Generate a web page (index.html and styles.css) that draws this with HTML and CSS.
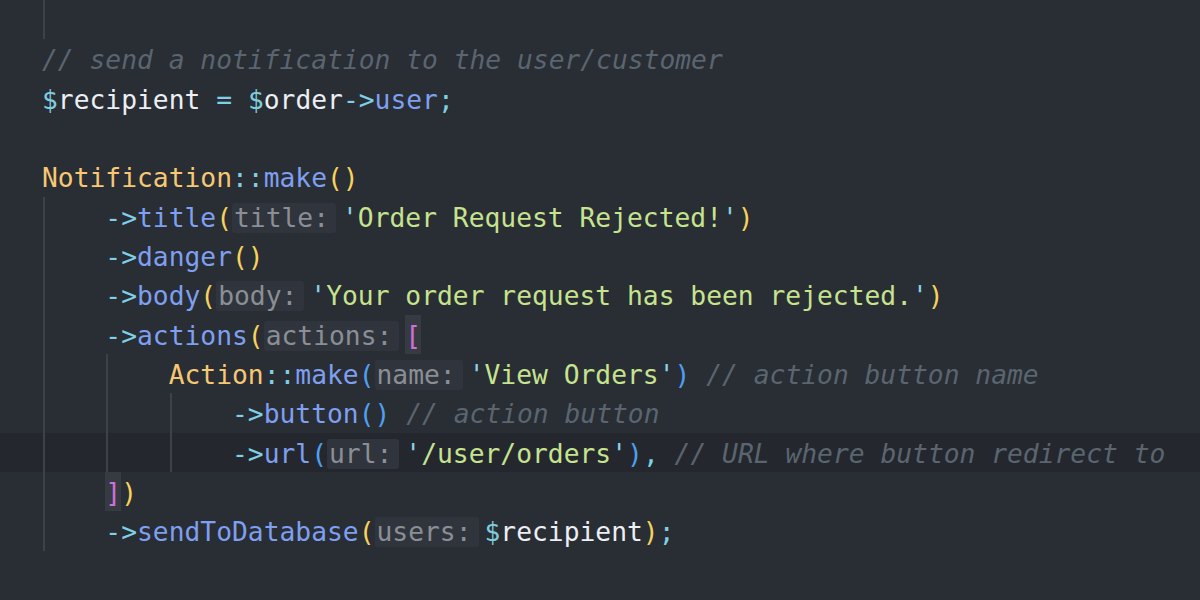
FILE: index.html
```html
<!DOCTYPE html>
<html lang="en">
<head>
<meta charset="utf-8">
<title>Notification code</title>
<link rel="stylesheet" href="styles.css">
</head>
<body>
<div class="editor">
  <div class="line"><span class="ind g">    </span></div>
  <div class="line"><span class="cm">// send a notification to the user/customer</span></div>
  <div class="line"><span class="dl">$</span><span class="var">recipient</span> <span class="op">=</span> <span class="dl">$</span><span class="var">order</span><span class="op">-&gt;</span><span class="fn">user</span><span class="op">;</span></div>
  <div class="line"> </div>
  <div class="line"><span class="cls">Notification</span><span class="op">::</span><span class="fn">make</span><span class="b1">()</span></div>
  <div class="line"><span class="ind g">    </span><span class="op">-&gt;</span><span class="fn">title</span><span class="b1">(</span><span class="hint">title:</span><span class="q">'</span><span class="str">Order Request Rejected!</span><span class="q">'</span><span class="b1">)</span></div>
  <div class="line"><span class="ind g">    </span><span class="op">-&gt;</span><span class="fn">danger</span><span class="b1">()</span></div>
  <div class="line"><span class="ind g">    </span><span class="op">-&gt;</span><span class="fn">body</span><span class="b1">(</span><span class="hint">body:</span><span class="q">'</span><span class="str">Your order request has been rejected.</span><span class="q">'</span><span class="b1">)</span></div>
  <div class="line"><span class="ind g">    </span><span class="op">-&gt;</span><span class="fn">actions</span><span class="b1">(</span><span class="hint">actions:</span><span class="b2 match">[</span></div>
  <div class="line"><span class="ind g">    </span><span class="ind g">    </span><span class="cls">Action</span><span class="op">::</span><span class="fn">make</span><span class="b3">(</span><span class="hint">name:</span><span class="q">'</span><span class="str">View Orders</span><span class="q">'</span><span class="b3">)</span> <span class="cm">// action button name</span></div>
  <div class="line"><span class="ind g">    </span><span class="ind g">    </span><span class="ind g">    </span><span class="op">-&gt;</span><span class="fn">button</span><span class="b3">()</span> <span class="cm">// action button</span></div>
  <div class="line current"><span class="ind g">    </span><span class="ind g">    </span><span class="ind g">    </span><span class="op">-&gt;</span><span class="fn">url</span><span class="b3">(</span><span class="hint">url:</span><span class="q">'</span><span class="str">/user/orders</span><span class="q">'</span><span class="b3">)</span><span class="op">,</span> <span class="cm">// URL where button redirect to</span></div>
  <div class="line"><span class="ind g">    </span><span class="b2 match">]</span><span class="b1">)</span></div>
  <div class="line"><span class="ind g">    </span><span class="op">-&gt;</span><span class="fn">sendToDatabase</span><span class="b1">(</span><span class="hint">users:</span><span class="dl">$</span><span class="var">recipient</span><span class="b1">)</span><span class="op">;</span></div>
</div>
</body>
</html>
```

FILE: styles.css
```css
html, body {
  margin: 0;
  padding: 0;
  background: #292d34;
}

body {
  width: 1200px;
  height: 600px;
  overflow: hidden;
}

.editor {
  font-family: "DejaVu Sans Mono", "Liberation Mono", monospace;
  font-size: 26.3px;
  color: #e6e9ee;
}

.line {
  height: 36.33px;
  line-height: 36.33px;
  padding-top: 3px;
  padding-left: 42px;
  white-space: pre;
  overflow: hidden;
}

.line.current {
  background: #24282e;
}

.ind {
  display: inline-block;
  width: 4ch;
  height: 39.33px;
  margin-top: -3px;
  vertical-align: top;
}

.ind.g {
  background: linear-gradient(#3c414a, #3c414a) no-repeat 1px 0 / 2px 100%;
}

.cm {
  color: #5a6570;
  font-style: italic;
}

.dl {
  color: #80cbdc;
}

.var {
  color: #eceff3;
}

.op {
  color: #7fd0e4;
}

.fn {
  color: #7f9ff0;
}

.cls {
  color: #f7c873;
}

.b1 {
  color: #f6d25c;
}

.b2 {
  color: #cf6fd8;
}

.b3 {
  color: #4f9ff0;
}

.match {
  display: inline-block;
  height: 39.33px;
  margin-top: -3px;
  padding-top: 3px;
  box-sizing: border-box;
  vertical-align: top;
  background: #363b43;
}

.q {
  color: #86d3e6;
}

.str {
  color: #c6e38e;
}

.hint {
  display: inline-block;
  line-height: 30px;
  padding: 0 7px 0 2px;
  margin-right: 6px;
  background: #30353d;
  color: #8b8f95;
  border-radius: 3px;
}
```
